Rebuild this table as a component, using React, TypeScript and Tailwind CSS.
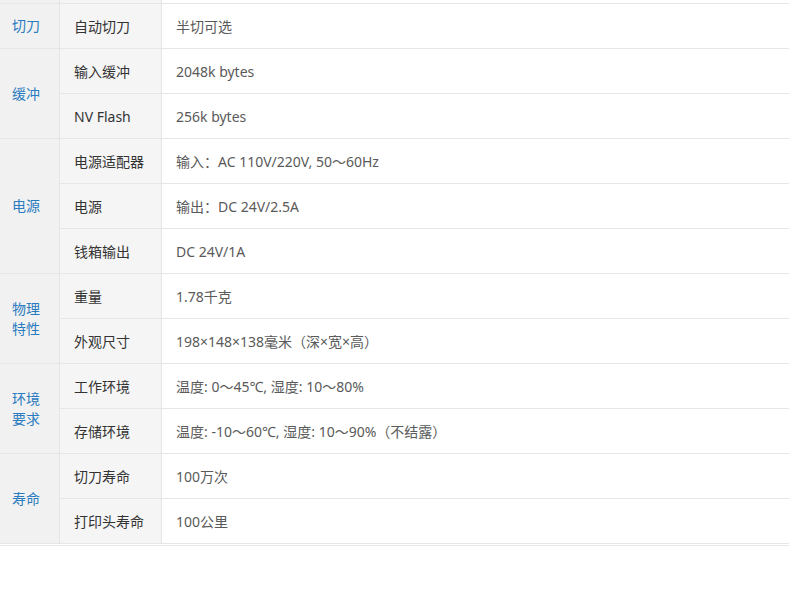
import React from 'react';

type Group = { label: string[]; rows: [string, string][] };

const groups: Group[] = [
  { label: ['切刀'], rows: [['自动切刀', '半切可选']] },
  {
    label: ['缓冲'],
    rows: [
      ['输入缓冲', '2048k bytes'],
      ['NV Flash', '256k bytes'],
    ],
  },
  {
    label: ['电源'],
    rows: [
      ['电源适配器', '输入：AC 110V/220V, 50～60Hz'],
      ['电源', '输出：DC 24V/2.5A'],
      ['钱箱输出', 'DC 24V/1A'],
    ],
  },
  {
    label: ['物理', '特性'],
    rows: [
      ['重量', '1.78千克'],
      ['外观尺寸', '198×148×138毫米（深×宽×高）'],
    ],
  },
  {
    label: ['环境', '要求'],
    rows: [
      ['工作环境', '温度: 0～45℃, 湿度: 10～80%'],
      ['存储环境', '温度: -10～60℃, 湿度: 10～90%（不结露）'],
    ],
  },
  {
    label: ['寿命'],
    rows: [
      ['切刀寿命', '100万次'],
      ['打印头寿命', '100公里'],
    ],
  },
];

export default function App() {
  return (
    <div
      className="w-[790px] h-[611px] bg-white overflow-hidden text-[14px]"
      style={{ fontFamily: '"Noto Sans", "Noto Sans CJK SC", sans-serif' }}
    >
      <table className="w-[789px] border-separate border-spacing-0 table-fixed">
        <colgroup>
          <col className="w-[60px]" />
          <col className="w-[102px]" />
          <col />
        </colgroup>
        <tbody>
          <tr>
            <td className="h-[4px] p-0 bg-[#f1f1f1] border-r border-b border-[#e6e6e6]" />
            <td className="h-[4px] p-0 bg-[#f5f5f5] border-r border-b border-[#e6e6e6]" />
            <td className="h-[4px] p-0 border-b border-[#e6e6e6]" />
          </tr>
          {groups.map((g) =>
            g.rows.map(([name, value], i) => (
              <tr key={g.label.join('') + name}>
                {i === 0 && (
                  <td
                    rowSpan={g.rows.length}
                    className="bg-[#f1f1f1] border-r border-b border-[#e6e6e6] pl-3 pr-2 text-[#2a7bbf] leading-5 align-middle"
                  >
                    {g.label.map((l) => (
                      <div key={l}>{l}</div>
                    ))}
                  </td>
                )}
                <td className="h-[45px] bg-[#f5f5f5] border-r border-b border-[#e6e6e6] px-[14px] text-[#333] whitespace-nowrap">
                  {name}
                </td>
                <td className="h-[45px] border-b border-[#e6e6e6] px-[14px] text-[#5a5a5a] whitespace-nowrap">
                  {value}
                </td>
              </tr>
            )),
          )}
        </tbody>
      </table>
      <div className="w-[789px] mt-[1px] border-t border-[#e6e6e6]" />
    </div>
  );
}
